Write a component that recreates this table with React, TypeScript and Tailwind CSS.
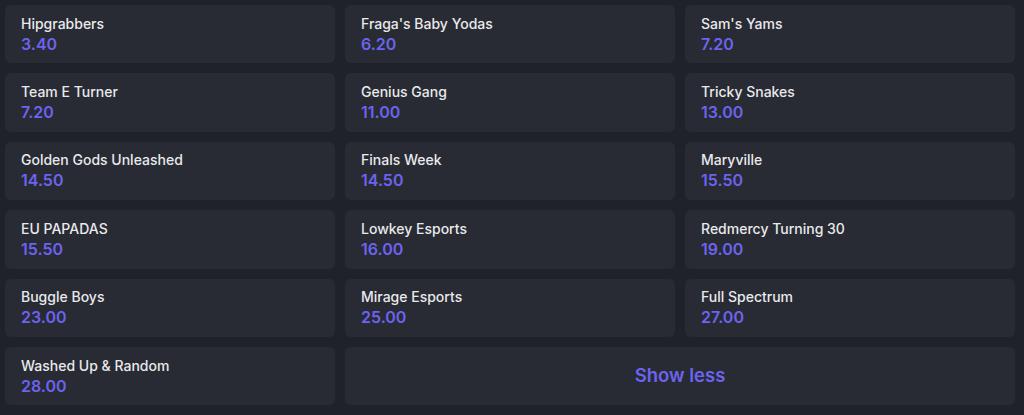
const teams: [string, string][] = [
  ["Hipgrabbers", "3.40"],
  ["Fraga's Baby Yodas", "6.20"],
  ["Sam's Yams", "7.20"],
  ["Team E Turner", "7.20"],
  ["Genius Gang", "11.00"],
  ["Tricky Snakes", "13.00"],
  ["Golden Gods Unleashed", "14.50"],
  ["Finals Week", "14.50"],
  ["Maryville", "15.50"],
  ["EU PAPADAS", "15.50"],
  ["Lowkey Esports", "16.00"],
  ["Redmercy Turning 30", "19.00"],
  ["Buggle Boys", "23.00"],
  ["Mirage Esports", "25.00"],
  ["Full Spectrum", "27.00"],
  ["Washed Up & Random", "28.00"],
];

function OddsCard({ name, odds }: { name: string; odds: string }) {
  return (
    <div className="flex flex-col justify-center rounded-[6px] bg-[#282b33] pl-[16px] pt-[1px]">
      <span className="text-[14px] leading-[18px] font-medium text-[#e8e9ec]">{name}</span>
      <span className="text-[16px] leading-[22px] font-semibold text-[#6c63ef]">{odds}</span>
    </div>
  );
}

export default function App() {
  return (
    <div className="h-[415px] w-[1024px] bg-[#20222a] pl-[5px] pt-[5px] font-['Inter',sans-serif]">
      <div className="grid w-[1010px] grid-cols-3 auto-rows-[58.4px] gap-x-[10px] gap-y-[10px]">
        {teams.map(([n, o]) => (
          <OddsCard key={n} name={n} odds={o} />
        ))}
        <button className="col-span-2 flex items-center justify-center rounded-[6px] bg-[#282b33] text-[18.5px] font-semibold text-[#6c63ef]">
          Show less
        </button>
      </div>
    </div>
  );
}
